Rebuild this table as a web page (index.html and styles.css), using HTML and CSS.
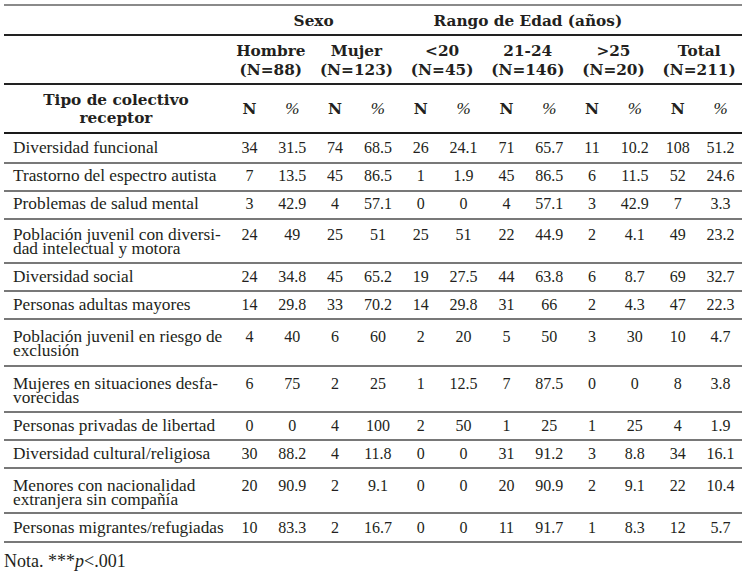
FILE: index.html
```html
<!DOCTYPE html>
<html lang="es">
<head>
<meta charset="utf-8">
<title>Tabla</title>
<link rel="stylesheet" href="styles.css">
</head>
<body>
<div class="page">
  <table class="tbl">
    <colgroup>
      <col class="c-label">
      <col><col><col><col><col><col><col><col><col><col><col><col>
    </colgroup>
    <thead>
      <tr class="h1">
        <th></th>
        <th colspan="4">Sexo</th>
        <th colspan="6">Rango de Edad (años)</th>
        <th colspan="2"></th>
      </tr>
      <tr class="h2">
        <th></th>
        <th colspan="2">Hombre<br>(N=88)</th>
        <th colspan="2">Mujer<br>(N=123)</th>
        <th colspan="2">&lt;20<br>(N=45)</th>
        <th colspan="2">21-24<br>(N=146)</th>
        <th colspan="2">&gt;25<br>(N=20)</th>
        <th colspan="2">Total<br>(N=211)</th>
      </tr>
      <tr class="h3">
        <th class="lab">Tipo de colectivo<br>receptor</th>
        <th>N</th><th class="pct">%</th>
        <th>N</th><th class="pct">%</th>
        <th>N</th><th class="pct">%</th>
        <th>N</th><th class="pct">%</th>
        <th>N</th><th class="pct">%</th>
        <th>N</th><th class="pct">%</th>
      </tr>
    </thead>
    <tbody>
      <tr class="first">
        <td class="lab">Diversidad funcional</td>
        <td>34</td><td>31.5</td><td>74</td><td>68.5</td><td>26</td><td>24.1</td><td>71</td><td>65.7</td><td>11</td><td>10.2</td><td>108</td><td>51.2</td>
      </tr>
      <tr>
        <td class="lab">Trastorno del espectro autista</td>
        <td>7</td><td>13.5</td><td>45</td><td>86.5</td><td>1</td><td>1.9</td><td>45</td><td>86.5</td><td>6</td><td>11.5</td><td>52</td><td>24.6</td>
      </tr>
      <tr>
        <td class="lab">Problemas de salud mental</td>
        <td>3</td><td>42.9</td><td>4</td><td>57.1</td><td>0</td><td>0</td><td>4</td><td>57.1</td><td>3</td><td>42.9</td><td>7</td><td>3.3</td>
      </tr>
      <tr class="two t1">
        <td class="lab">Población juvenil con diversi&shy;dad intelectual y motora</td>
        <td>24</td><td>49</td><td>25</td><td>51</td><td>25</td><td>51</td><td>22</td><td>44.9</td><td>2</td><td>4.1</td><td>49</td><td>23.2</td>
      </tr>
      <tr>
        <td class="lab">Diversidad social</td>
        <td>24</td><td>34.8</td><td>45</td><td>65.2</td><td>19</td><td>27.5</td><td>44</td><td>63.8</td><td>6</td><td>8.7</td><td>69</td><td>32.7</td>
      </tr>
      <tr>
        <td class="lab">Personas adultas mayores</td>
        <td>14</td><td>29.8</td><td>33</td><td>70.2</td><td>14</td><td>29.8</td><td>31</td><td>66</td><td>2</td><td>4.3</td><td>47</td><td>22.3</td>
      </tr>
      <tr class="two t2">
        <td class="lab">Población juvenil en riesgo de exclusión</td>
        <td>4</td><td>40</td><td>6</td><td>60</td><td>2</td><td>20</td><td>5</td><td>50</td><td>3</td><td>30</td><td>10</td><td>4.7</td>
      </tr>
      <tr class="two t3">
        <td class="lab">Mujeres en situaciones desfa&shy;vorecidas</td>
        <td>6</td><td>75</td><td>2</td><td>25</td><td>1</td><td>12.5</td><td>7</td><td>87.5</td><td>0</td><td>0</td><td>8</td><td>3.8</td>
      </tr>
      <tr>
        <td class="lab">Personas privadas de libertad</td>
        <td>0</td><td>0</td><td>4</td><td>100</td><td>2</td><td>50</td><td>1</td><td>25</td><td>1</td><td>25</td><td>4</td><td>1.9</td>
      </tr>
      <tr>
        <td class="lab">Diversidad cultural/religiosa</td>
        <td>30</td><td>88.2</td><td>4</td><td>11.8</td><td>0</td><td>0</td><td>31</td><td>91.2</td><td>3</td><td>8.8</td><td>34</td><td>16.1</td>
      </tr>
      <tr class="two t4">
        <td class="lab">Menores con nacionalidad extranjera sin compañía</td>
        <td>20</td><td>90.9</td><td>2</td><td>9.1</td><td>0</td><td>0</td><td>20</td><td>90.9</td><td>2</td><td>9.1</td><td>22</td><td>10.4</td>
      </tr>
      <tr class="last">
        <td class="lab">Personas migrantes/refugiadas</td>
        <td>10</td><td>83.3</td><td>2</td><td>16.7</td><td>0</td><td>0</td><td>11</td><td>91.7</td><td>1</td><td>8.3</td><td>12</td><td>5.7</td>
      </tr>
    </tbody>
  </table>
  <p class="nota">Nota. ***<i>p</i>&lt;.001</p>
</div>
</body>
</html>
```

FILE: styles.css
```css
html, body {
  margin: 0;
  padding: 0;
  background: #ffffff;
}

.page {
  padding: 4px 8px 0 4px;
  color: #231f20;
  font-family: "Liberation Serif", "Times New Roman", serif;
}

.tbl {
  width: 738px;
  table-layout: fixed;
  border-collapse: collapse;
  border-top: 2px solid #8a8a8a;
}

.c-label {
  width: 224px;
}

.tbl th {
  font-family: "DejaVu Serif", serif;
  font-weight: bold;
  font-size: 15.3px;
  color: #231f20;
  text-align: center;
  padding: 0;
}

.h1 th {
  line-height: 17px;
  padding: 7px 0 3.5px;
  border-bottom: 2px solid #222;
}

.h2 th {
  line-height: 19px;
  padding: 6.5px 0 2.5px;
  border-bottom: 2px solid #222;
}

.h3 th {
  line-height: 18px;
  padding: 6px 0 5px;
  vertical-align: middle;
  border-bottom: 2px solid #1a1a1a;
}

.h3 th.pct {
  font-family: "Liberation Serif", serif;
  font-weight: normal;
  font-style: italic;
  font-size: 17px;
}

.tbl td {
  font-size: 16px;
  line-height: 14px;
  text-align: center;
  vertical-align: top;
  padding: 5.5px 0 6.5px;
  border-bottom: 2px solid #787878;
  white-space: nowrap;
}

.tbl td.lab {
  font-size: 17.3px;
  text-align: left;
  padding-left: 9px;
  padding-right: 0;
  white-space: normal;
  hyphens: manual;
}

.tbl tr.first td {
  padding-top: 7.5px;
  padding-bottom: 6.5px;
}

.tbl tr.two td {
  padding-top: 10px;
}

.tbl tr.t1 td { padding-top: 8px; padding-bottom: 6.5px; }
.tbl tr.t2 td { padding-bottom: 7px; }
.tbl tr.t3 td { padding-bottom: 6px; }
.tbl tr.t4 td { padding-bottom: 5px; }

.tbl tr.last td {
  padding-top: 7px;
  padding-bottom: 6px;
}

.nota {
  margin: 8px 0 0;
  font-size: 18px;
  line-height: 20px;
}
```
